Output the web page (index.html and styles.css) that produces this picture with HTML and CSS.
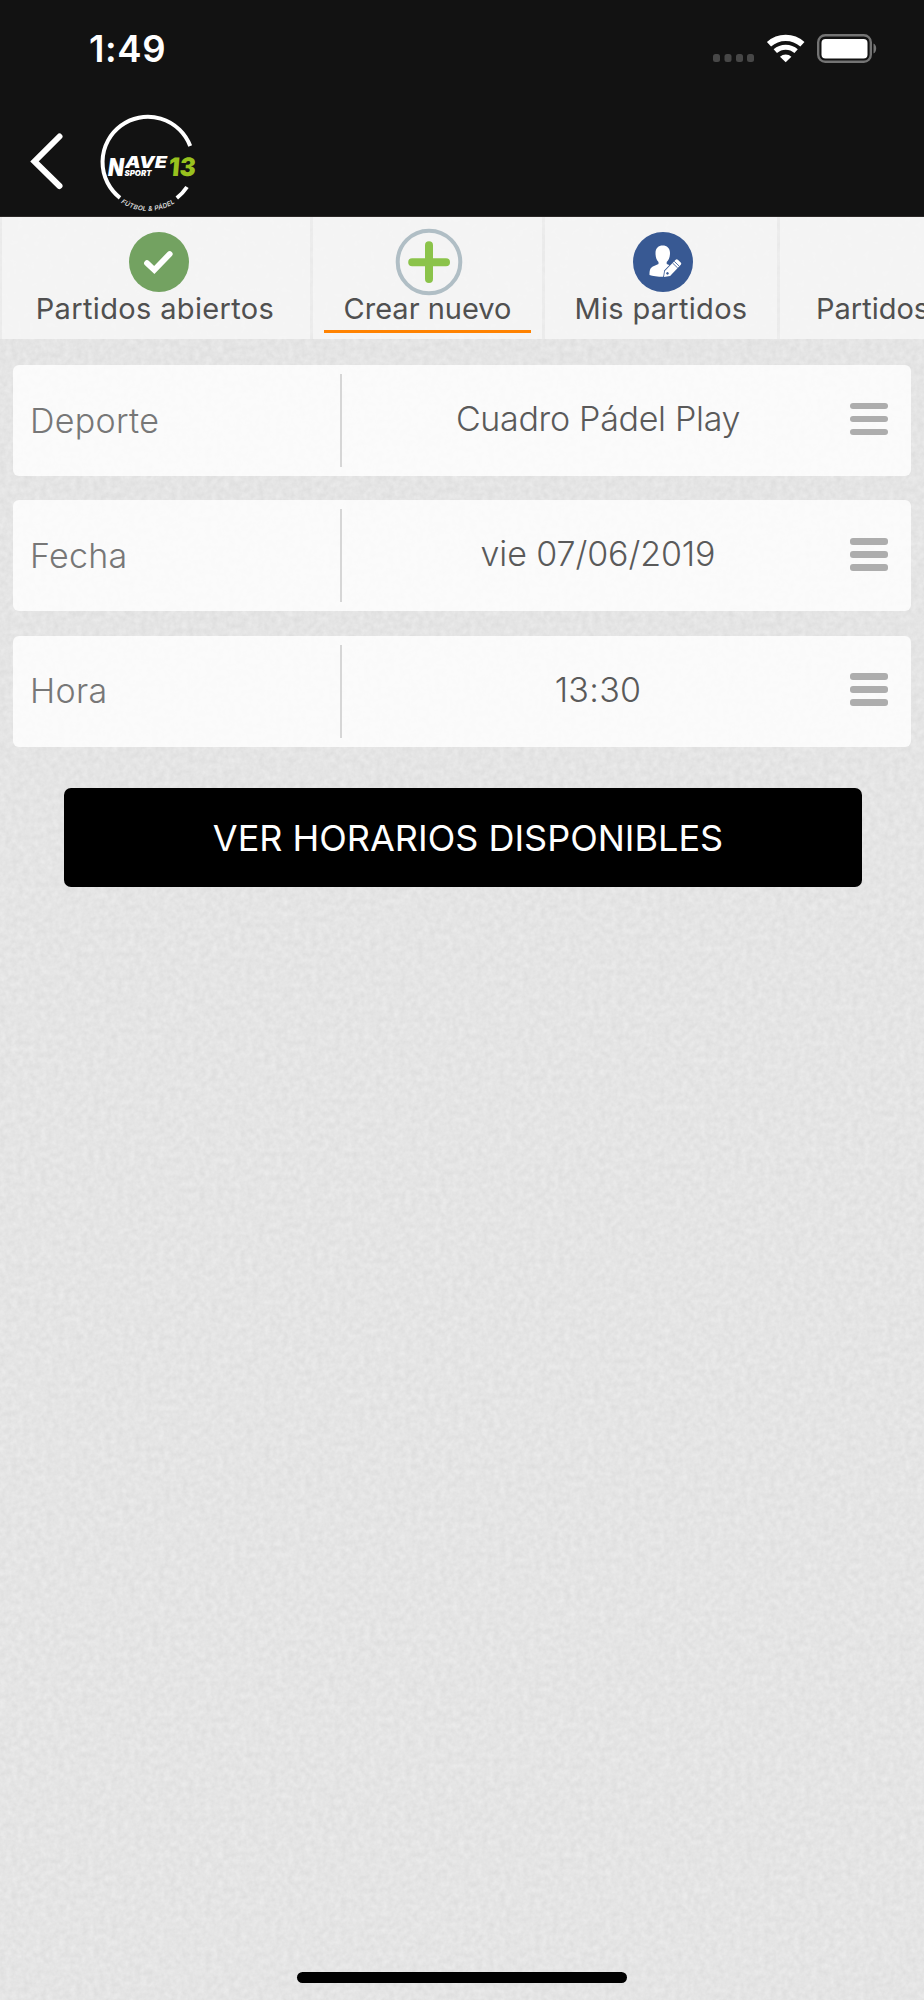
FILE: index.html
```html
<!DOCTYPE html>
<html lang="es">
<head>
<meta charset="utf-8">
<title>Nave 13 Sport</title>
<link rel="stylesheet" href="styles.css">
</head>
<body>
<div class="screen">
  <svg class="paper" width="924" height="1783" aria-hidden="true">
    <filter id="grain" x="0" y="0" width="100%" height="100%" color-interpolation-filters="sRGB">
      <feTurbulence type="fractalNoise" baseFrequency="0.17" numOctaves="3" seed="4"/>
      <feColorMatrix values="0.07 0 0 0 0.861  0.07 0 0 0 0.861  0.07 0 0 0 0.861  0 0 0 0 1"/>
    </filter>
    <rect width="924" height="1783" filter="url(#grain)"/>
  </svg>

  <header class="header">
    <div class="status">
      <span class="clock">1:49</span>
      <svg class="status-icons" width="170" height="36" viewBox="0 0 170 36">
        <g fill="#474747">
          <rect x="1" y="22" width="7" height="8" rx="2.5"/><rect x="12.5" y="22" width="7" height="8" rx="2.5"/><rect x="24" y="22" width="7" height="8" rx="2.5"/><rect x="35" y="22" width="7" height="8" rx="2.5"/>
        </g>
        <g fill="none" stroke="#fff">
          <path d="M57 12.3a25 25 0 0 1 33.400 0" stroke-width="6.200"/>
          <path d="M63.300 19.200a15.500 15.500 0 0 1 20.800 0" stroke-width="5"/>
        </g>
        <path d="M68 24.800a8.200 8.200 0 0 1 11.400 0L73.700 30.200z" fill="#fff"/>
        <rect x="106.200" y="3.200" width="52.600" height="26.600" rx="7" fill="none" stroke="#747474" stroke-width="2.400"/>
        <rect x="109.500" y="7" width="46" height="19.500" rx="4" fill="#fff"/>
        <path d="M161.500 11.500c3.600 1.200 3.600 8.800 0 10z" fill="#747474"/>
      </svg>
    </div>
    <div class="nav">
      <svg class="back" width="34" height="58" viewBox="0 0 34 58"><path d="M29.500 4.500L4.500 29.500L29.500 54" fill="none" stroke="#fff" stroke-width="6" stroke-linecap="round"/></svg>
      <svg class="logo" width="100" height="104" viewBox="98 112 100 104">
        <g fill="none" stroke="#fff" stroke-width="4">
          <path d="M190.200 146A45.300 45.300 0 1 0 120 197.800"/>
          <path d="M187 187A47 47 0 0 1 176.800 198"/>
        </g>
        <g class="logo-text">
          <text x="108" y="175.500" font-size="25" textLength="16" lengthAdjust="spacingAndGlyphs">N</text>
          <text x="125" y="168.300" font-size="15.500" textLength="42" lengthAdjust="spacingAndGlyphs">AVE</text>
          <text x="124.500" y="175.600" font-size="8" textLength="27" lengthAdjust="spacingAndGlyphs">SPORT</text>
          <text class="logo-number" transform="translate(168 175.500) skewX(-5)" font-size="25.500" textLength="27" lengthAdjust="spacingAndGlyphs">13</text>
        </g>
        <path id="tagline" d="M120.500 202.500A49 49 0 0 0 175.500 202.500" fill="none"/>
        <text class="tagline"><textPath href="#tagline" startOffset="0.500" textLength="57">FÚTBOL &amp; PÁDEL</textPath></text>
      </svg>
    </div>
  </header>

  <nav class="tabs">
    <div class="tab tab-open">
      <svg class="tab-icon" width="68" height="68" viewBox="0 0 68 68"><circle cx="34" cy="34" r="30" fill="#73a261"/><path d="M22 35.200L29.300 42L44.700 26" fill="none" stroke="#fff" stroke-width="5.800" stroke-linecap="round"/></svg>
      <span class="label label-open">Partidos abiertos</span>
    </div>
    <div class="tab tab-new">
      <svg class="tab-icon" width="68" height="68" viewBox="0 0 68 68"><circle cx="34" cy="34" r="31.300" fill="none" stroke="#b0bec5" stroke-width="4"/><path d="M34 17.300V51M17.200 34.200H51" stroke="#8bc34a" stroke-width="8" stroke-linecap="round"/></svg>
      <span class="label label-new">Crear nuevo</span>
    </div>
    <div class="tab tab-mine">
      <svg class="tab-icon" width="68" height="68" viewBox="0 0 68 68">
        <circle cx="34" cy="34" r="30" fill="#385993"/>
        <path d="M26.500 25c0-5 3-7.500 7.200-7.500s7.300 2.500 7.300 7.500c0 4-1.200 7-3.300 9v2l5 2-6.500 6-1.700 4.700c-6 0-11-.3-14-1.700 0-6 1-7.500 4.500-9l4.500-2v-2c-2-2-3-5-3-9z" fill="#fff"/>
        <g transform="translate(35 49) rotate(-46)"><path d="M0 0L5-3.600H20.500Q22-3.600 22-2V2Q22 3.600 20.500 3.600H5z" fill="#fff" stroke="#385993" stroke-width="1.600" paint-order="stroke"/><circle cx="5" cy="0" r="1.300" fill="#385993"/><path d="M16-3.600V3.600M18.400-3.600V3.600" stroke="#385993" stroke-width=".8"/></g>
      </svg>
      <span class="label label-mine">Mis partidos</span>
    </div>
    <div class="tab tab-next"><span class="label label-next">Partidos</span></div>
  </nav>

  <main class="form">
    <div class="field"><span class="name">Deporte</span><span class="value value-court">Cuadro Pádel Play</span><span class="menu"><i></i><i></i><i></i></span></div>
    <div class="field"><span class="name">Fecha</span><span class="value">vie 07/06/2019</span><span class="menu"><i></i><i></i><i></i></span></div>
    <div class="field"><span class="name">Hora</span><span class="value value-hour">13:30</span><span class="menu"><i></i><i></i><i></i></span></div>
    <button class="submit">VER HORARIOS DISPONIBLES</button>
  </main>
  <div class="home"></div>
</div>
</body>
</html>
```
FILE: styles.css
```css
* { box-sizing: border-box; }
body { margin: 0; font-family: Inter, "Liberation Sans", sans-serif; }
.screen { position: relative; z-index: 0; width: 924px; height: 2000px; overflow: hidden; background: #e4e4e4; display: flex; flex-direction: column; }
.paper { position: absolute; left: 0; top: 217px; z-index: -1; }
.header { flex: none; height: 217px; background: #121212; border-bottom: 1px solid #2b2827; }
.status { height: 105px; padding: 30px 42px 0 89px; display: flex; justify-content: space-between; }
.clock { color: #fff; font-size: 36.500px; font-weight: 600; line-height: 38px; letter-spacing: .6px; }
.status-icons { margin-top: 2px; }
.nav { display: flex; padding: 7px 0 0 30px; }
.back { margin-top: 20px; }
.logo { margin-left: 34px; }
.logo-text { font-weight: 900; font-style: italic; fill: #fff; }
.logo-number { font-style: normal; fill: #98c11e; }
.tagline { font-size: 6.5px; font-weight: 600; font-style: italic; fill: #ddd; }

.tabs { flex: none; height: 122px; display: flex; gap: 3px; padding-left: 2px; background: rgba(240, 240, 240, .6); overflow: hidden; }
.tab { flex: none; background: rgba(248, 248, 248, .7); display: flex; flex-direction: column; align-items: center; padding-top: 11px; }
.tab-open { width: 308px; padding-left: 5px; }
.tab-new { width: 229px; padding-left: 2px; background: linear-gradient(#ff8200, #ff8200) 11px 113px / 207px 3px no-repeat, rgba(248, 248, 248, .7); }
.tab-mine { width: 232px; padding-left: 3px; }
.tab-next { width: 308px; align-items: flex-start; padding: 79px 0 0 36px; }
.tab-icon { flex: none; overflow: visible; }
.label { font-size: 29px; line-height: 26px; color: #505050; white-space: nowrap; }
.label-open { letter-spacing: .35px; margin-left: -7px; }
.label-new { margin-left: -2px; }
.label-mine { letter-spacing: .3px; margin-left: -3px; }

.form { display: flex; flex-direction: column; padding: 26px 13px 0; }
.field { height: 111px; margin-bottom: 24.300px; display: flex; align-items: center; background: rgba(255, 255, 255, .82); border-radius: 6px; font-size: 34px; font-weight: 300; white-space: nowrap; }
.name { width: 329px; height: 93px; padding: 0 0 1px 17px; border-right: 2px solid #d6d6d6; display: flex; align-items: center; color: #777; letter-spacing: .3px; }
.value { width: 508px; padding: 0 0 4px 4px; text-align: center; color: #5a5a5a; letter-spacing: -.1px; }
.value-court { letter-spacing: -.3px; }
.value-hour { letter-spacing: .3px; }
.menu { width: 38px; display: flex; flex-direction: column; gap: 6.500px; margin-top: -3px; }
.menu i { height: 6.500px; border-radius: 3px; background: #adadad; }
.submit { width: 798px; height: 99px; margin: 17.500px 0 0 51px; padding: 0 0 0 10px; border: 0; border-radius: 7px; background: #000; color: #fff; font: 400 36px Inter, sans-serif; white-space: nowrap; }
.home { position: absolute; left: 297px; top: 1971.500px; width: 330px; height: 11px; border-radius: 6px; background: #000; }
```
